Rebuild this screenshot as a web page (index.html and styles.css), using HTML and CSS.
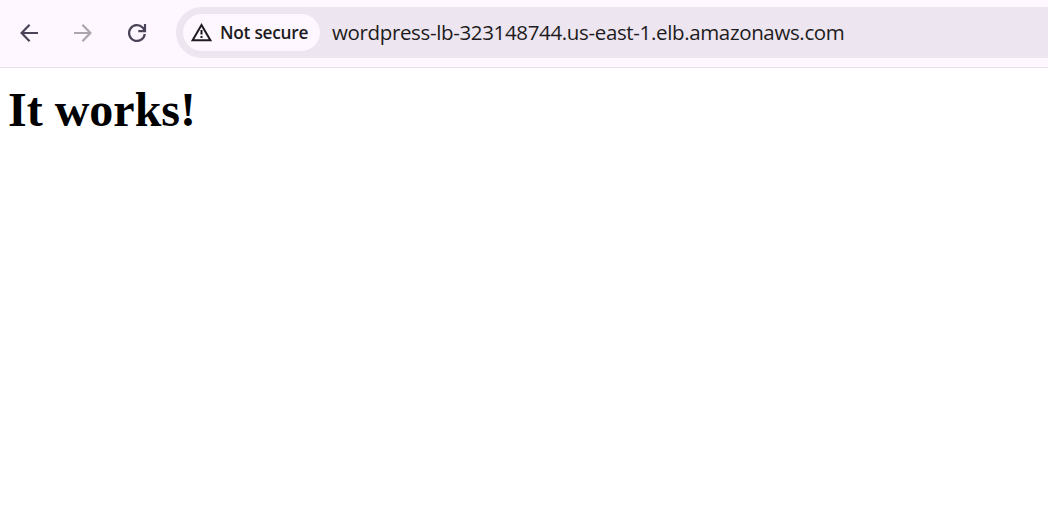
FILE: index.html
```html
<!DOCTYPE html>
<html lang="en">
<head>
<meta charset="utf-8">
<title>It works!</title>
<link rel="stylesheet" href="styles.css">
</head>
<body>
<header class="toolbar">
  <nav class="nav">
    <svg class="icon" viewBox="0 0 22 22"><path d="M20 11H4M11.6 2.8 3.6 11l8 8.2"/></svg>
    <svg class="icon disabled" viewBox="0 0 22 22"><path d="M2 11H18M10.4 2.8l8 8.2-8 8.2"/></svg>
    <svg class="icon" viewBox="0 0 22 22"><path d="M18.8 12a7.9 7.9 0 1 1-2-6.3L18.6 8M19 2v7.2H12.3"/></svg>
  </nav>
  <div class="address">
    <div class="chip">
      <svg class="warn" viewBox="0 0 23 23"><path d="M11.5 3.9 2.6 19.2h17.8zM11.5 9v4.6M11.5 15v2"/></svg>
      <span class="label">Not secure</span>
    </div>
    <span class="url">wordpress-lb-323148744.us-east-1.elb.amazonaws.com</span>
  </div>
</header>
<main class="page"><h1 class="title">It works!</h1></main>
</body>
</html>
```
FILE: styles.css
```css
body { margin: 0; background: #fff; overflow: hidden; }
.toolbar { display: flex; box-sizing: border-box; height: 68px; padding: 7px 0 9px 18px; background: #fef7ff; border-bottom: 1px solid #e7dfee; }
.nav { display: flex; align-items: center; gap: 32px; width: 158px; flex: none; }
.icon { width: 22px; height: 22px; fill: none; stroke: #4a4458; stroke-width: 2.2; }
.disabled { stroke: #aba5ad; }
.address { display: flex; align-items: center; flex: 1; height: 51px; padding-left: 7px; box-sizing: border-box; border-radius: 26px 0 0 26px; background: #ede6f0; }
.chip { display: flex; align-items: center; width: 137px; height: 37px; box-sizing: border-box; padding-left: 7px; border-radius: 19px; background: #fef7ff; }
.warn { width: 23px; height: 23px; fill: none; stroke: #1d1b20; stroke-width: 2; }
.label { margin-left: 7px; font: 600 17.3px "Open Sans", sans-serif; letter-spacing: -0.25px; color: #1d1b20; white-space: nowrap; }
.url { margin-left: 12px; padding-bottom: 2px; font: 20.5px "Open Sans", sans-serif; letter-spacing: -0.35px; color: #1d1b20; white-space: nowrap; }
.page { padding: 14px 8px; }
.title { margin: 0; font: bold 48px/55px "Liberation Serif", serif; color: #000; }
```
